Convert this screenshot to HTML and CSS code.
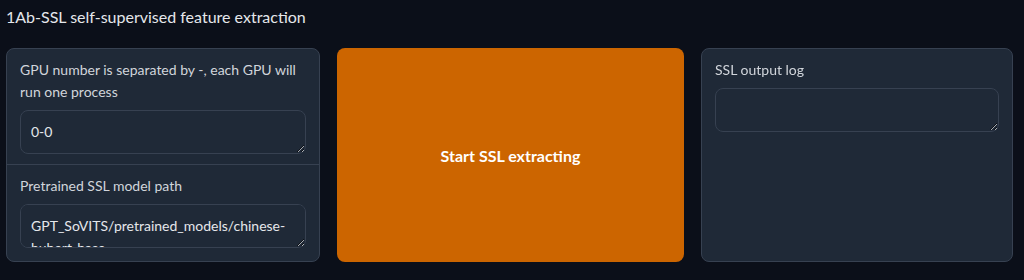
FILE: index.html
```html
<!DOCTYPE html>
<html>
<head>
    <meta charset="utf-8">
    <title>1Ab-SSL</title>
    <link rel="stylesheet" href="styles.css">
</head>
<body>
    <div class="page">
        <div class="title">1Ab-SSL self-supervised feature extraction</div>
        <div class="row">
            <div class="card card-left">
                <div class="block">
                    <label class="label" for="gpu">GPU number is separated by -, each GPU will run one process</label>
                    <textarea id="gpu" class="box" rows="1">0-0</textarea>
                </div>
                <div class="block">
                    <label class="label" for="ssl-path">Pretrained SSL model path</label>
                    <textarea id="ssl-path" class="box" rows="1">GPT_SoVITS/pretrained_models/chinese-hubert-base</textarea>
                </div>
            </div>
            <button class="btn">Start SSL extracting</button>
            <div class="card card-right">
                <div class="block">
                    <label class="label" for="log">SSL output log</label>
                    <textarea id="log" class="box" rows="1"></textarea>
                </div>
            </div>
        </div>
    </div>
</body>
</html>
```

FILE: styles.css
```css
body {
    margin: 0;
    background-color: #0b0f19;
    font-family: Lato, "Noto Sans", sans-serif;
    color: #e5e7eb;
}

.page {
    padding: 4px 11px 0 6px;
}

.title {
    font-size: 16px;
    line-height: 26px;
    margin-bottom: 18px;
}

.row {
    display: flex;
    gap: 17px;
    height: 214px;
}

.card {
    background-color: #1f2937;
    border: 1px solid #374151;
    border-radius: 8px;
    overflow: hidden;
}

.card-left {
    flex: 0 0 314px;
    box-sizing: border-box;
}

.card-right {
    flex: 1;
}

.block {
    padding: 10px 13px 10px 13px;
    border-bottom: 1px solid #374151;
}

.block:last-child {
    border-bottom: none;
}

.label {
    display: block;
    font-size: 14px;
    line-height: 22px;
    color: #d1d5db;
    margin-bottom: 7px;
}

.box {
    display: block;
    box-sizing: border-box;
    width: 100%;
    height: 44px;
    padding: 10px 10px;
    background-color: #1f2937;
    border: 1px solid #374151;
    border-radius: 8px;
    color: #e5e7eb;
    font-family: Lato, "Noto Sans", sans-serif;
    font-size: 14px;
    line-height: 22px;
    resize: vertical;
    outline: none;
}

.btn {
    flex: 0 0 347px;
    background-color: #cc6500;
    border: none;
    border-radius: 8px;
    color: #fff;
    font-family: Lato, "Noto Sans", sans-serif;
    font-size: 16px;
    font-weight: bold;
}
```
